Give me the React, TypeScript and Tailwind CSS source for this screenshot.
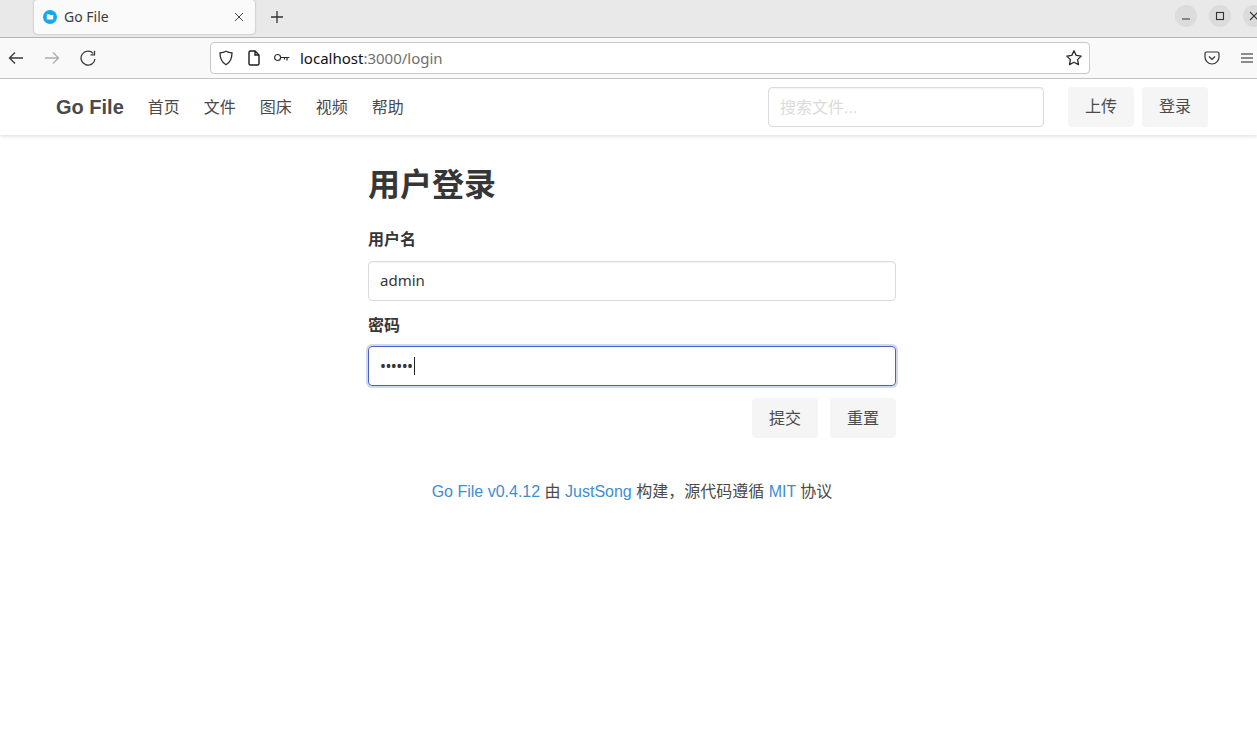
import React from "react";

const ui = { fontFamily: '"Noto Sans", "Open Sans", sans-serif' };

function Btn({ children, low }: { children: React.ReactNode; low?: boolean }) {
  return (
    <div className={low ? "w-[66px] h-10 rounded bg-[#f5f5f5] flex items-center justify-center pt-[2px] text-[16px] text-[#4a4a4a]" : "w-[66px] h-10 rounded bg-[#f5f5f5] flex items-center justify-center text-[16px] text-[#4a4a4a]"}>
      {children}
    </div>
  );
}

function Field({ label, children }: { label: string; children: React.ReactNode }) {
  return (
    <div>
      <div className="h-[24px] flex items-center text-[16px] font-bold text-[#363636]">{label}</div>
      {children}
    </div>
  );
}

export default function App() {
  return (
    <div
      className="w-[1257px] h-[756px] overflow-hidden bg-white flex flex-col"
      style={{ fontFamily: '"Liberation Sans", "Noto Sans CJK SC", sans-serif' }}
    >
      {/* tab strip */}
      <div className="h-[38px] shrink-0 bg-[#e9e9e9] border-b border-[#b4b4b4] flex items-start pl-[34px] relative">
        <div className="w-[221px] h-[34px] bg-[#fafafa] rounded-b rounded-t-[3px] shadow-[0_0_2px_rgba(0,0,0,0.35)] flex items-center pl-[9px] pr-[11px]">
          <svg width="14" height="14" viewBox="0 0 14 14" className="shrink-0">
            <circle cx="7" cy="7" r="7" fill="#12a9f2" />
            <path d="M3.800 4.200h2.400l.8.8h3.200v4.600H3.800z" fill="#fff" />
          </svg>
          <span className="ml-[7px] text-[14px] text-[#3c3c3c] leading-none" style={ui}>Go File</span>
          <svg width="10" height="10" viewBox="0 0 10 10" className="ml-auto" stroke="#444" strokeWidth="1" fill="none">
            <path d="M1 1l8 8M9 1l-8 8" />
          </svg>
        </div>
        <svg width="14" height="14" viewBox="0 0 14 14" className="ml-[15px] mt-[10px]" stroke="#333" strokeWidth="1.3" fill="none">
          <path d="M7 1v12M1 7h12" />
        </svg>
        <div className="ml-auto flex items-center gap-[12px] mt-[5px] mr-[-8px]">
          <div className="w-[22px] h-[22px] rounded-full bg-[#dcdcdc] flex items-center justify-center">
            <svg width="10" height="10" viewBox="0 0 10 10" stroke="#333" strokeWidth="1" fill="none"><path d="M1 8h8" /></svg>
          </div>
          <div className="w-[22px] h-[22px] rounded-full bg-[#dcdcdc] flex items-center justify-center">
            <svg width="10" height="10" viewBox="0 0 10 10" stroke="#333" strokeWidth="1.1" fill="none"><rect x="1.500" y="1.500" width="7" height="7" /></svg>
          </div>
          <div className="w-[22px] h-[22px] rounded-full bg-[#dcdcdc] flex items-center justify-center">
            <svg width="10" height="10" viewBox="0 0 10 10" stroke="#333" strokeWidth="1.1" fill="none"><path d="M1 1l8 8M9 1l-8 8" /></svg>
          </div>
        </div>
      </div>

      {/* toolbar */}
      <div className="h-[41px] shrink-0 bg-[#f9f9f9] border-b border-[#c4c4c4] flex items-center relative">
        <svg width="16" height="16" viewBox="0 0 16 16" className="ml-[8px]" stroke="#3a3a3a" strokeWidth="1.3" fill="none">
          <path d="M15 8H1.500M7 2.500L1.500 8 7 13.500" />
        </svg>
        <svg width="16" height="16" viewBox="0 0 16 16" className="ml-[20px]" stroke="#adadad" strokeWidth="1.3" fill="none">
          <path d="M1 8h13.500M9 2.500L14.500 8 9 13.500" />
        </svg>
        <svg width="16" height="16" viewBox="0 0 16 16" className="ml-[20px]" stroke="#3a3a3a" strokeWidth="1.3" fill="none">
          <path d="M15 9a7 7 0 1 1-1.800-5.600" />
          <path d="M14.500 .8v4H10.500" />
        </svg>
        <div className="ml-[114px] w-[880px] h-[32px] bg-white border border-[#c8c8c8] rounded flex items-center pl-[7px] pr-[6px]">
          <svg width="16" height="16" viewBox="0 0 16 16" stroke="#2b2b2b" strokeWidth="1.3" fill="none">
            <path d="M8 1.200c1.800 1 3.800 1.500 6 1.600 0 5.600-1.600 9.600-6 12-4.400-2.400-6-6.400-6-12 2.200-.1 4.200-.6 6-1.600z" />
          </svg>
          <svg width="14" height="16" viewBox="0 0 14 16" className="ml-[13px]" stroke="#1c1c1c" strokeWidth="1.4" fill="none">
            <path d="M2 2.500A1.500 1.500 0 0 1 3.500 1H8l4 4v8.500a1.500 1.500 0 0 1-1.500 1.500h-7A1.500 1.500 0 0 1 2 13.500z" />
            <path d="M8 1v4h4" />
          </svg>
          <svg width="16" height="10" viewBox="0 0 16 10" className="ml-[13px]" stroke="#2b2b2b" strokeWidth="1.2" fill="none">
            <circle cx="3.600" cy="4.500" r="3" />
            <path d="M6.600 4.500H15.500M13 4.500v3M10.500 4.500v2" />
          </svg>
          <span className="ml-[10px] text-[15px] leading-none text-[#111]" style={ui}>
            localhost<span className="text-[#6f6f6f]">:3000/login</span>
          </span>
          <svg width="18" height="18" viewBox="0 0 18 18" className="ml-auto" stroke="#2b2b2b" strokeWidth="1.3" fill="none" strokeLinejoin="round">
            <path d="M9 1.800l2.200 4.600 5 .7-3.600 3.500.9 5-4.500-2.400-4.500 2.400.9-5L1.800 7.100l5-.7z" />
          </svg>
        </div>
        <svg width="16" height="16" viewBox="0 0 16 16" className="ml-[114px]" stroke="#333" strokeWidth="1.200" fill="none">
          <path d="M2.500 2h11a1.500 1.500 0 0 1 1.500 1.500V7a7 7 0 0 1-14 0V3.500A1.500 1.500 0 0 1 2.500 2z" />
          <path d="M5 6.500l3 3 3-3" />
        </svg>
        <svg width="14" height="12" viewBox="0 0 14 12" className="ml-[20px] shrink-0 -mt-[1px]" stroke="#222" strokeWidth="1.200" fill="none">
          <path d="M1 2h12M1 6h12M1 10h12" />
        </svg>
      </div>

      {/* navbar */}
      <nav className="h-[56px] shrink-0 bg-white shadow-[0_2px_3px_rgba(10,10,10,0.1)] flex items-center pl-[56px] pr-[49px] relative">
        <span className="text-[20px] font-bold text-[#4a4a4a]">Go File</span>
        <div className="ml-[24px] flex gap-[24px] text-[16px] text-[#4a4a4a] mt-[1px]">
          <span>首页</span>
          <span>文件</span>
          <span>图床</span>
          <span>视频</span>
          <span>帮助</span>
        </div>
        <div className="ml-auto w-[276px] h-10 border border-[#dbdbdb] rounded flex items-center px-[11px] pt-[1px] text-[16px] text-[#dbdbdb] shadow-[inset_0_1px_2px_rgba(10,10,10,0.05)]">
          搜索文件...
        </div>
        <div className="ml-[24px] flex gap-2">
          <Btn>上传</Btn>
          <Btn>登录</Btn>
        </div>
      </nav>

      {/* main */}
      <main className="w-[528px] ml-[368px] flex flex-col">
        <h1 className="mt-[30px] text-[32px] font-bold leading-[40px] text-[#363636]">用户登录</h1>
        <div className="mt-[23px] flex flex-col gap-[13px]">
          <Field label="用户名">
            <div className="mt-[9px] h-10 border border-[#dbdbdb] rounded flex items-center px-[11px] pb-[2px] text-[15px] text-[#363636] shadow-[inset_0_1px_2px_rgba(10,10,10,0.05)]" style={ui}>
              admin
            </div>
          </Field>
          <Field label="密码">
            <div className="mt-[8px] h-10 border border-[#485fc7] rounded flex items-center px-[11px] text-[#363636] shadow-[0_0_0_2px_rgba(72,95,199,0.25)]">
              <span className="text-[16px] tracking-[-0.600px] leading-none" style={ui}>••••••</span>
              <span className="w-px h-[18px] bg-[#222] ml-[1px]" />
            </div>
          </Field>
        </div>
        <div className="mt-[12px] flex justify-end gap-[12px]">
          <Btn low>提交</Btn>
          <Btn low>重置</Btn>
        </div>
        <p className="mt-[42px] text-center text-[16px] leading-[24px] text-[#4a4a4a]">
          <span className="text-[#3e8ed0]">Go File v0.4.12</span> 由 <span className="text-[#3e8ed0]">JustSong</span> 构建，源代码遵循 <span className="text-[#3e8ed0]">MIT</span> 协议
        </p>
      </main>
    </div>
  );
}
